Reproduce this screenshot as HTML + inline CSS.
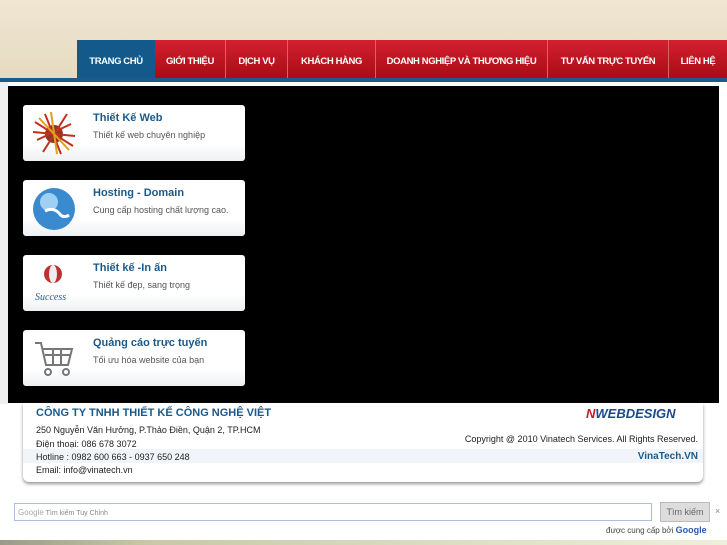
<!DOCTYPE html>
<html><head><meta charset="utf-8"><style>
*{margin:0;padding:0;box-sizing:border-box}
body{width:727px;height:545px;overflow:hidden;font-family:"Liberation Sans",Arial,sans-serif;background:#fff;position:relative}
.top{position:absolute;left:0;top:0;width:727px;height:79px;background:linear-gradient(#efe6d3,#e6dac0)}
.bl{position:absolute;left:0;top:78px;width:727px;height:4px;background:#1c5a8a}
.nav{position:absolute;top:40px;height:38px;color:#fff;font-size:9.5px;font-weight:bold;text-align:center;line-height:43px;border-right:1px solid #e06060;background:linear-gradient(#d42030,#a80c16);letter-spacing:-0.4px}
.nav.a{background:#135a8a;border:none}
.side{position:absolute;left:0;top:82px;width:8px;height:322px;background:#f0f0f0}
.black{position:absolute;left:8px;top:86px;width:711px;height:317px;background:#000}
.card{position:absolute;left:23px;width:222px;height:56px;border-radius:3px;background:linear-gradient(#fff 70%,#eef0f2);}
.card h3{position:absolute;left:70px;top:7px;font-size:11px;color:#1a5a8a}
.card p{position:absolute;left:70px;top:25px;font-size:9px;color:#555}
.ic{position:absolute;left:8px;top:5px;width:46px;height:46px}
.foot{position:absolute;left:23px;top:403px;width:680px;height:79px;background:#fff;border-radius:0 0 6px 6px;box-shadow:0 2px 3px #999}
.foot div{position:absolute;font-size:9px;color:#222}
.band{position:absolute;left:0;top:46px;width:680px;height:14px;background:#f1f5f9}
</style></head><body>
<div class="top"></div><div class="bl"></div>
<div class="nav a" style="left:77px;width:78px">TRANG CHỦ</div>
<div class="nav" style="left:155px;width:71px">GIỚI THIỆU</div>
<div class="nav" style="left:226px;width:62px">DỊCH VỤ</div>
<div class="nav" style="left:288px;width:88px">KHÁCH HÀNG</div>
<div class="nav" style="left:376px;width:172px">DOANH NGHIỆP VÀ THƯƠNG HIỆU</div>
<div class="nav" style="left:548px;width:121px">TƯ VẤN TRỰC TUYẾN</div>
<div class="nav" style="left:669px;width:58px;border:none">LIÊN HỆ</div>
<div class="side"></div>
<div class="black"></div>
<div class="card" style="top:105px"><svg class="ic" viewBox="0 0 46 46"><circle cx="23" cy="24" r="9" fill="#8a3a20"/><g stroke-width="2"><path d="M4 12L42 36M6 30L40 14M14 4L30 44M36 4L12 42M2 22L44 26" stroke="#c03020"/><path d="M8 8L38 40M20 2L26 44" stroke="#e0a020"/></g></svg><h3>Thiết Kế Web</h3><p>Thiết kế web chuyên nghiệp</p></div>
<div class="card" style="top:180px"><svg class="ic" viewBox="0 0 46 46"><circle cx="23" cy="24" r="21" fill="#3a8ad0"/><circle cx="18" cy="17" r="9" fill="#9ed0f4"/><path d="M14 26q8-4 14 2q4 6 10 2" stroke="#fff" stroke-width="3" fill="none"/></svg><h3>Hosting - Domain</h3><p>Cung cấp hosting chất lượng cao.</p></div>
<div class="card" style="top:255px"><svg class="ic" viewBox="0 0 46 46"><circle cx="22" cy="14" r="9" fill="#c03030"/><ellipse cx="22" cy="14" rx="4" ry="9" fill="#eee"/><text x="4" y="40" font-size="10" font-style="italic" fill="#2a5a9a" font-family="Liberation Serif">Success</text></svg><h3>Thiết kế -In ấn</h3><p>Thiết kế đẹp, sang trọng</p></div>
<div class="card" style="top:330px"><svg class="ic" viewBox="0 0 46 46" fill="none" stroke="#777" stroke-width="2"><path d="M4 8h6l5 22h22l4-16H12"/><path d="M14 20h26M22 14v16M30 14v16"/><circle cx="17" cy="37" r="3"/><circle cx="35" cy="37" r="3"/></svg><h3>Quảng cáo trực tuyến</h3><p>Tối ưu hóa website của bạn</p></div>
<div class="foot"><div class="band"></div>
<div style="left:13px;top:4px;font-size:11px;font-weight:bold;color:#1a5a8a">CÔNG TY TNHH THIẾT KẾ CÔNG NGHỆ VIỆT</div>
<div style="left:13px;top:22px">250 Nguyễn Văn Hưởng, P.Thảo Điền, Quận 2, TP.HCM</div>
<div style="left:13px;top:36px">Điện thoại: 086 678 3072</div>
<div style="left:13px;top:49px">Hotline : 0982 600 663 - 0937 650 248</div>
<div style="left:13px;top:62px">Email: info@vinatech.vn</div>
<div style="left:563px;top:3px;width:112px;height:24px;font-size:13px;font-style:italic;color:#1a4a8a;font-weight:bold"><span style="color:#c02020">N</span>WEBDESIGN</div>
<div style="right:5px;top:31px">Copyright @ 2010 Vinatech Services. All Rights Reserved.</div>
<div style="right:5px;top:48px;font-size:10px;font-weight:bold;color:#1a5a8a">VinaTech.VN</div>
</div>
<div style="position:absolute;left:14px;top:503px;width:638px;height:18px;border:1px solid #a8c0dc;font-size:7px;color:#888;padding:4px 3px"><span style="color:#aaa;font-size:8px">Google</span> Tìm kiếm Tuy Chỉnh</div>
<div style="position:absolute;left:660px;top:502px;width:50px;height:20px;background:#ddd;border:1px solid #bbb;font-size:9px;color:#666;text-align:center;line-height:18px">Tìm kiếm</div>
<div style="position:absolute;left:715px;top:506px;font-size:9px;color:#888">×</div>
<div style="position:absolute;left:606px;top:525px;font-size:8px;color:#444">được cung cấp bởi <b style="color:#2a5ab0;font-size:9px">Google</b></div>
<div style="position:absolute;left:0;top:540px;width:727px;height:5px;background:linear-gradient(90deg,#9a9a88,#c8c8a8 20%,#eef0dc)"></div>
</body></html>
